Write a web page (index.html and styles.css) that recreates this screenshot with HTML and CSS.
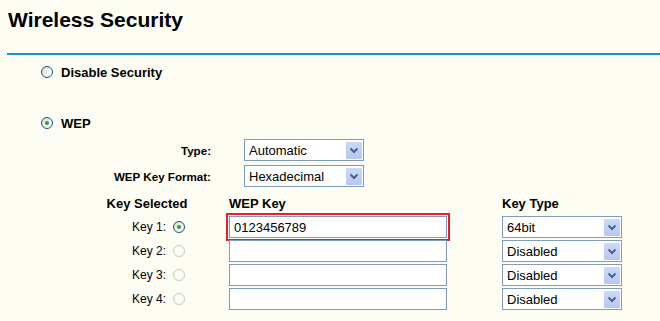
FILE: index.html
```
<!DOCTYPE html>
<html lang="en">
<head>
  <meta charset="UTF-8">
  <title>Wireless Security</title>
  <link rel="stylesheet" href="styles.css">
</head>
<body>
  <div class="title-bar">
    <h1>Wireless Security</h1>
  </div>

  <div class="mode mode-off">
    <span class="radio"></span>
    <span>Disable Security</span>
  </div>

  <div class="mode mode-wep">
    <span class="radio checked"></span>
    <span>WEP</span>
  </div>

  <div class="wep-opts">
    <div class="opt-label">Type:</div>
    <div class="select">
      <span class="select-text">Automatic</span>
      <span class="arrow"><svg width="16" height="17" viewBox="0 0 16 17"><path d="M4.5 6.5 L8 10 L11.5 6.5" fill="none" stroke="#4d6185" stroke-width="2"/></svg></span>
    </div>
    <div class="opt-label">WEP Key Format:</div>
    <div class="select">
      <span class="select-text">Hexadecimal</span>
      <span class="arrow"><svg width="16" height="17" viewBox="0 0 16 17"><path d="M4.5 6.5 L8 10 L11.5 6.5" fill="none" stroke="#4d6185" stroke-width="2"/></svg></span>
    </div>
  </div>

  <div class="keys">
    <div class="head head-sel">Key Selected</div>
    <div class="head">WEP Key</div>
    <div class="head">Key Type</div>

    <div class="key-sel"><span>Key 1:</span><span class="radio checked"></span></div>
    <div class="key-cell"><input class="key-input marked" type="text" value="0123456789"></div>
    <div class="select">
      <span class="select-text">64bit</span>
      <span class="arrow"><svg width="16" height="17" viewBox="0 0 16 17"><path d="M4.5 6.5 L8 10 L11.5 6.5" fill="none" stroke="#4d6185" stroke-width="2"/></svg></span>
    </div>

    <div class="key-sel"><span>Key 2:</span><span class="radio disabled"></span></div>
    <div class="key-cell"><input class="key-input" type="text" value=""></div>
    <div class="select">
      <span class="select-text">Disabled</span>
      <span class="arrow"><svg width="16" height="17" viewBox="0 0 16 17"><path d="M4.5 6.5 L8 10 L11.5 6.5" fill="none" stroke="#4d6185" stroke-width="2"/></svg></span>
    </div>

    <div class="key-sel"><span>Key 3:</span><span class="radio disabled"></span></div>
    <div class="key-cell"><input class="key-input" type="text" value=""></div>
    <div class="select">
      <span class="select-text">Disabled</span>
      <span class="arrow"><svg width="16" height="17" viewBox="0 0 16 17"><path d="M4.5 6.5 L8 10 L11.5 6.5" fill="none" stroke="#4d6185" stroke-width="2"/></svg></span>
    </div>

    <div class="key-sel"><span>Key 4:</span><span class="radio disabled"></span></div>
    <div class="key-cell"><input class="key-input" type="text" value=""></div>
    <div class="select">
      <span class="select-text">Disabled</span>
      <span class="arrow"><svg width="16" height="17" viewBox="0 0 16 17"><path d="M4.5 6.5 L8 10 L11.5 6.5" fill="none" stroke="#4d6185" stroke-width="2"/></svg></span>
    </div>
  </div>
</body>
</html>
```

FILE: styles.css
```
body {
  margin: 0;
  background-color: #fdfdf3;
  font-family: Arial, "Liberation Sans", sans-serif;
  color: #000;
}
.title-bar {
  margin-left: 7px;
  height: 53px;
  border-bottom: 2px solid #0f98cd;
}
h1 {
  margin: 0;
  padding: 8px 0 0 1px;
  font-size: 21px;
  line-height: 24px;
  font-weight: bold;
}
.mode {
  display: flex;
  align-items: center;
  gap: 8px;
  height: 20px;
  margin-left: 41px;
  font-size: 13px;
  font-weight: bold;
}
.mode-off {
  margin-top: 7px;
}
.mode-wep {
  margin-top: 31px;
}
.radio {
  position: relative;
  width: 12px;
  height: 12px;
  box-sizing: border-box;
  border: 1px solid #1c5180;
  border-radius: 50%;
  background: linear-gradient(135deg, #d8d8d0, #f6f6f2 60%, #ffffff);
  flex: none;
}
.radio.checked::after {
  content: "";
  position: absolute;
  left: 3px;
  top: 3px;
  width: 4px;
  height: 4px;
  border-radius: 50%;
  background: #2aa52a;
}
.radio.disabled {
  border-color: #cbc9bc;
  background: #fdfdf8;
}
.wep-opts {
  display: grid;
  grid-template-columns: 211px 120px;
  grid-auto-rows: 22px;
  column-gap: 33px;
  row-gap: 4px;
  margin-top: 6px;
}
.opt-label {
  align-self: center;
  text-align: right;
  font-size: 11.6px;
  font-weight: bold;
}
.select {
  display: flex;
  align-items: center;
  justify-content: space-between;
  width: 120px;
  height: 22px;
  box-sizing: border-box;
  border: 1px solid #7f9db9;
  background: #fff;
  padding: 0 1px 0 4px;
  font-size: 13px;
  align-self: center;
}
.arrow {
  display: flex;
  width: 16px;
  height: 17px;
  background: linear-gradient(#cbd9fb, #b5c8f3);
  border-radius: 1px;
}
.keys {
  display: grid;
  grid-template-columns: 127px 273px 120px;
  grid-auto-rows: 24px;
  margin: 4px 0 0 102px;
}
.head {
  display: flex;
  align-items: center;
  font-size: 13px;
  font-weight: bold;
}
.head-sel {
  justify-content: center;
  padding-right: 37px;
}
.key-sel {
  display: flex;
  align-items: center;
  justify-content: flex-end;
  gap: 7px;
  padding-right: 44px;
  font-size: 12px;
}
.key-cell {
  display: flex;
  align-items: center;
}
.key-input {
  width: 218px;
  height: 22px;
  box-sizing: border-box;
  margin: 0;
  border: 1px solid #7f9db9;
  padding: 0 4px;
  background: #fff;
  font-family: Arial, "Liberation Sans", sans-serif;
  font-size: 13px;
  color: #000;
}
.key-input.marked {
  outline: 2px solid #ee1c24;
  outline-offset: 1px;
}
```
